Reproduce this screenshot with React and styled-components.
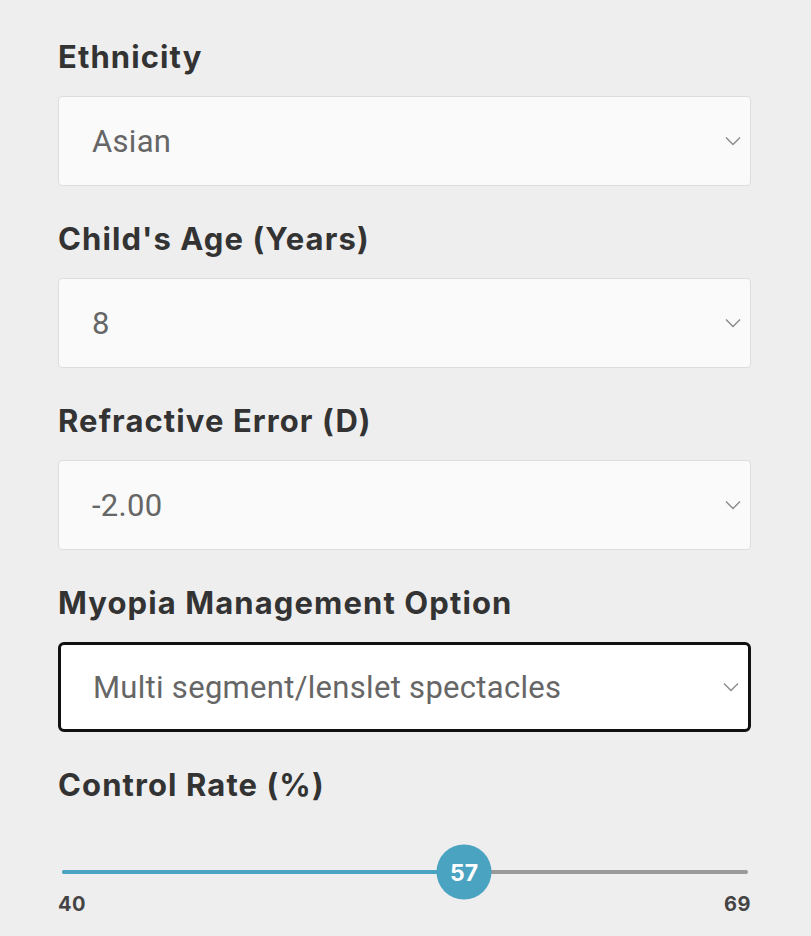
import { createGlobalStyle, styled } from 'styled-components';

const GlobalStyle = createGlobalStyle`
  html, body {
    margin: 0;
    padding: 0;
    background: #eeeeee;
  }
`;

const fields = [
  { label: 'Ethnicity', value: 'Asian' },
  { label: "Child's Age (Years)", value: '8' },
  { label: 'Refractive Error (D)', value: '-2.00' },
  { label: 'Myopia Management Option', value: 'Multi segment/lenslet spectacles', focused: true },
];

const slider = { min: 40, max: 69, value: 57 };

const Chevron = () => (
  <svg width="16" height="10" viewBox="0 0 16 10" fill="none">
    <path d="M1 1.5 L8 8.5 L15 1.5" stroke="#8a8a8a" strokeWidth="1.4" />
  </svg>
);

const App = () => {
  const pct = ((slider.value - slider.min) / (slider.max - slider.min)) * 100;

  return (
    <Wrapper>
      <GlobalStyle />
      {fields.map((f) => (
        <Field key={f.label}>
          <Label>{f.label}</Label>
          <SelectBox $focused={f.focused}>
            <span>{f.value}</span>
            <Chevron />
          </SelectBox>
        </Field>
      ))}
      <Field>
        <Label>Control Rate (%)</Label>
        <SliderArea>
          <Track>
            <Filled style={{ width: `${pct}%` }} />
            <Thumb style={{ left: `${pct}%` }}>{slider.value}</Thumb>
          </Track>
          <Range>
            <span>{slider.min}</span>
            <span>{slider.max}</span>
          </Range>
        </SliderArea>
      </Field>
    </Wrapper>
  );
};

const Wrapper = styled.main`
  box-sizing: border-box;
  width: 811px;
  min-height: 936px;
  padding: 37px 60px 0 58px;
  display: flex;
  flex-direction: column;
  gap: 33px;
`;

const Field = styled.section`
  display: flex;
  flex-direction: column;
  gap: 19px;
`;

const Label = styled.h2`
  margin: 0;
  font-family: Inter, 'Noto Sans', sans-serif;
  font-weight: 700;
  font-size: 31px;
  line-height: 40px;
  letter-spacing: 1.1px;
  color: #333333;
`;

const SelectBox = styled.div`
  box-sizing: border-box;
  height: 90px;
  display: flex;
  align-items: center;
  justify-content: space-between;
  padding: 0 9px 0 ${(p) => (p.$focused ? '32px' : '33px')};
  background: ${(p) => (p.$focused ? '#ffffff' : '#fafafa')};
  border: ${(p) => (p.$focused ? '3px solid #111111' : '1px solid #dddddd')};
  border-radius: ${(p) => (p.$focused ? '6px' : '4px')};
  font-family: Roboto, 'Liberation Sans', sans-serif;
  font-size: 31px;
  letter-spacing: 0.3px;
  color: #666666;

  svg {
    flex-shrink: 0;
  }
`;

const SliderArea = styled.div`
  display: flex;
  flex-direction: column;
  padding-top: 46px;
`;

const Track = styled.div`
  position: relative;
  margin: 0 3px 0 4px;
  height: 4px;
  background: #9a9a9a;
  border-radius: 2px;
`;

const Filled = styled.div`
  height: 100%;
  background: #4aa3c0;
  border-radius: 2px;
`;

const Thumb = styled.div`
  position: absolute;
  top: 50%;
  width: 55px;
  height: 55px;
  transform: translate(-50%, -50%);
  border-radius: 50%;
  background: #4aa3c0;
  color: #ffffff;
  display: flex;
  align-items: center;
  justify-content: center;
  font-family: Inter, 'Noto Sans', sans-serif;
  font-weight: 700;
  font-size: 23px;
`;

const Range = styled.div`
  display: flex;
  justify-content: space-between;
  margin-top: 18px;
  font-family: Inter, 'Noto Sans', sans-serif;
  font-weight: 700;
  font-size: 20px;
  letter-spacing: 0.5px;
  color: #444444;
`;

export default App;
